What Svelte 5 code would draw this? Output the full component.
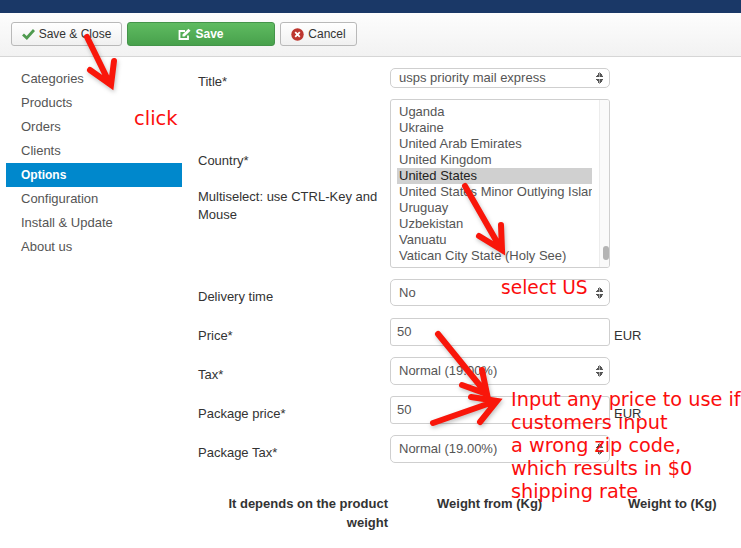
<script>
  const menu = ['Categories', 'Products', 'Orders', 'Clients', 'Options', 'Configuration', 'Install & Update', 'About us']
  const countries = ['Uganda', 'Ukraine', 'United Arab Emirates', 'United Kingdom', 'United States', 'United States Minor Outlying Islands', 'Uruguay', 'Uzbekistan', 'Vanuatu', 'Vatican City State (Holy See)']
  const arrows = [
    'M87 37 L110 84 M90 70 L111 85 L114 61',
    'M465 186 L501 249 M479 236 L502 250 L501 225',
    'M438 334 L486 393 M462 385 L487 394 L482 370',
    'M433 423 L496 401 M471 397 L497 401 L480 422'
  ]
</script>

<div class="page">
  <div class="topbar"></div>

  <div class="toolbar">
    <button class="btn close">
      <svg width="13" height="12" viewBox="0 0 13 12"><path d="M1 6.5 L4.8 10 L12 2" fill="none" stroke="#4f9a4f" stroke-width="2.8"/></svg>
      Save &amp; Close
    </button>
    <button class="btn save">
      <svg width="13" height="13" viewBox="0 0 13 13"><path d="M10 7.5 V11 H1.5 V3 H7" fill="none" stroke="#fff" stroke-width="1.8"/><path d="M4.5 6.5 L10.5 .8 L12.5 2.8 L6.5 8.5 H4.5 Z" fill="#fff"/></svg>
      Save
    </button>
    <button class="btn cancel">
      <svg width="13" height="13" viewBox="0 0 13 13"><circle cx="6.5" cy="6.5" r="6.2" fill="#bd362f"/><path d="M4.2 4.2 L8.8 8.8 M8.8 4.2 L4.2 8.8" stroke="#fff" stroke-width="1.8"/></svg>
      Cancel
    </button>
  </div>

  <div class="body">
    <nav class="sidebar">
      {#each menu as item}
        <div class="item" class:active={item === 'Options'}>{item}</div>
      {/each}
    </nav>

    <form class="form">
      <div class="row first">
        <div class="label title-label">Title*</div>
        <div class="select small">usps priority mail express<span class="updown"></span></div>
      </div>

      <div class="row">
        <div class="label country">
          <p>Country*</p>
          <p class="note">Multiselect: use CTRL-Key and Mouse</p>
        </div>
        <div class="listbox">
          <div class="options">
            {#each countries as c}
              <div class="option" class:picked={c === 'United States'}>{c}</div>
            {/each}
          </div>
          <div class="track"><div class="thumb"></div></div>
        </div>
      </div>

      <div class="row">
        <div class="label">Delivery time</div>
        <div class="select delivery">No<span class="updown"></span></div>
      </div>

      <div class="row price">
        <div class="label">Price*</div>
        <input class="input" value="50" />
        <span class="unit">EUR</span>
      </div>

      <div class="row">
        <div class="label">Tax*</div>
        <div class="select">Normal (19.00%)<span class="updown"></span></div>
      </div>

      <div class="row">
        <div class="label">Package price*</div>
        <input class="input" value="50" />
        <span class="unit">EUR</span>
      </div>

      <div class="row">
        <div class="label">Package Tax*</div>
        <div class="select">Normal (19.00%)<span class="updown"></span></div>
      </div>

      <div class="weights">
        <div class="depends">It depends on the product weight</div>
        <div class="from">Weight from (Kg)</div>
        <div class="to">Weight to (Kg)</div>
      </div>
    </form>
  </div>

  <!-- annotations drawn on top of the screenshot -->
  <svg class="marks" width="741" height="548">
    {#each arrows as d}
      <path {d} fill="none" stroke="#f9160a" stroke-width="6" stroke-linecap="round" stroke-linejoin="miter" />
    {/each}
  </svg>
  <div class="note-click">click</div>
  <div class="note-us">select US</div>
  <div class="note-price">Input any price to use if<br />customers input<br />a wrong zip code,<br />which results in $0<br />shipping rate</div>
</div>

<style>
  :global(*) { box-sizing: border-box; margin: 0; padding: 0; }
  :global(body) {
    font-family: "Liberation Sans", Arial, sans-serif;
    font-size: 13px;
    color: #333;
    background: #fff;
    overflow: hidden;
  }

  .page { position: relative; width: 741px; height: 548px; overflow: hidden; }

  .topbar { height: 13px; background: #1a3867; }

  .toolbar {
    display: flex;
    gap: 5px;
    height: 44px;
    padding: 9px 11px 0;
    background: linear-gradient(#fdfdfd, #f2f2f2);
    border-bottom: 1px solid #d6d6d6;
  }

  .btn {
    display: flex;
    align-items: center;
    justify-content: center;
    gap: 4px;
    height: 24px;
    border: 1px solid #b9b9b9;
    border-radius: 3px;
    background: linear-gradient(#ffffff, #f0f0f0);
    color: #333;
    font: 12px "Liberation Sans", Arial, sans-serif;
  }
  .close { width: 111px; }
  .save {
    width: 148px;
    background: linear-gradient(#5fbb61, #48a14c);
    border-color: #44944a;
    color: #fff;
    font-weight: bold;
  }
  .cancel { width: 77px; }

  .body { display: flex; padding: 10px 0 0 6px; }

  .sidebar { width: 176px; flex-shrink: 0; }
  .item { height: 24px; line-height: 24px; padding-left: 15px; color: #555; }
  .item.active { background: #0088cc; color: #fff; font-weight: bold; font-size: 12px; }

  .form { margin-left: 16px; padding-top: 1px; width: 540px; }

  .row { display: flex; align-items: flex-start; margin-bottom: 11px; }
  .row.first { height: 20px; }
  .row.price { margin-top: 12px; }
  .label { width: 192px; flex-shrink: 0; padding-top: 9px; line-height: 18px; color: #333; }
  .title-label { padding-top: 5px; }
  .country { padding-top: 53px; padding-right: 6px; }
  .note { margin-top: 18px; }

  .select {
    position: relative;
    width: 220px;
    height: 28px;
    line-height: 25px;
    padding-left: 8px;
    border: 1px solid #cfcfcf;
    border-radius: 5px;
    background: #fff;
    color: #555;
  }
  .select.small { height: 20px; line-height: 18px; }
  .select.delivery { height: 27px; }
  .updown {
    position: absolute;
    right: 6px;
    top: 50%;
    width: 7px;
    height: 12px;
    margin-top: -6px;
    background:
      linear-gradient(to top left, #555 50%, transparent 51%) left top / 50% 5px no-repeat,
      linear-gradient(to top right, #555 50%, transparent 51%) right top / 50% 5px no-repeat,
      linear-gradient(to bottom left, #555 50%, transparent 51%) left bottom / 50% 5px no-repeat,
      linear-gradient(to bottom right, #555 50%, transparent 51%) right bottom / 50% 5px no-repeat;
  }

  .listbox {
    display: flex;
    width: 220px;
    height: 169px;
    border: 1px solid #cfcfcf;
    border-radius: 3px;
    overflow: hidden;
  }
  .options { width: 208px; padding: 4px 0 0 6px; flex-shrink: 0; }
  .option {
    width: 195px;
    height: 16px;
    line-height: 16px;
    padding-left: 2px;
    white-space: nowrap;
    overflow: hidden;
    color: #555;
  }
  .option.picked { background: #d0d0d0; color: #222; }
  .track {
    position: relative;
    flex: 1;
    background: #fafafa;
    border-left: 1px solid #ececec;
  }
  .thumb {
    position: absolute;
    left: 3px;
    bottom: 7px;
    width: 6px;
    height: 14px;
    border-radius: 3px;
    background: #b4b4b4;
  }

  .input {
    width: 220px;
    height: 28px;
    padding: 0 6px 2px;
    border: 1px solid #cfcfcf;
    border-radius: 3px;
    color: #555;
    font: 13px "Liberation Sans", Arial, sans-serif;
    outline: none;
  }
  .unit { margin-left: 4px; padding-top: 9px; line-height: 18px; }

  .weights { display: flex; margin-top: 31px; font-weight: bold; line-height: 19px; }
  .depends { width: 190px; text-align: right; }
  .from { margin-left: 49px; width: 191px; }

  .marks { position: absolute; left: 0; top: 0; filter: drop-shadow(1px 2px 2px rgba(0, 0, 0, .25)); }

  .note-click, .note-us, .note-price {
    position: absolute;
    font-family: "DejaVu Sans", sans-serif;
    color: #fb0d0d;
  }
  .note-click { left: 134px; top: 107px; font-size: 19.5px; }
  .note-us { left: 501px; top: 277px; font-size: 18.6px; }
  .note-price { left: 511px; top: 388px; font-size: 19.3px; line-height: 23px; white-space: nowrap; }
</style>
